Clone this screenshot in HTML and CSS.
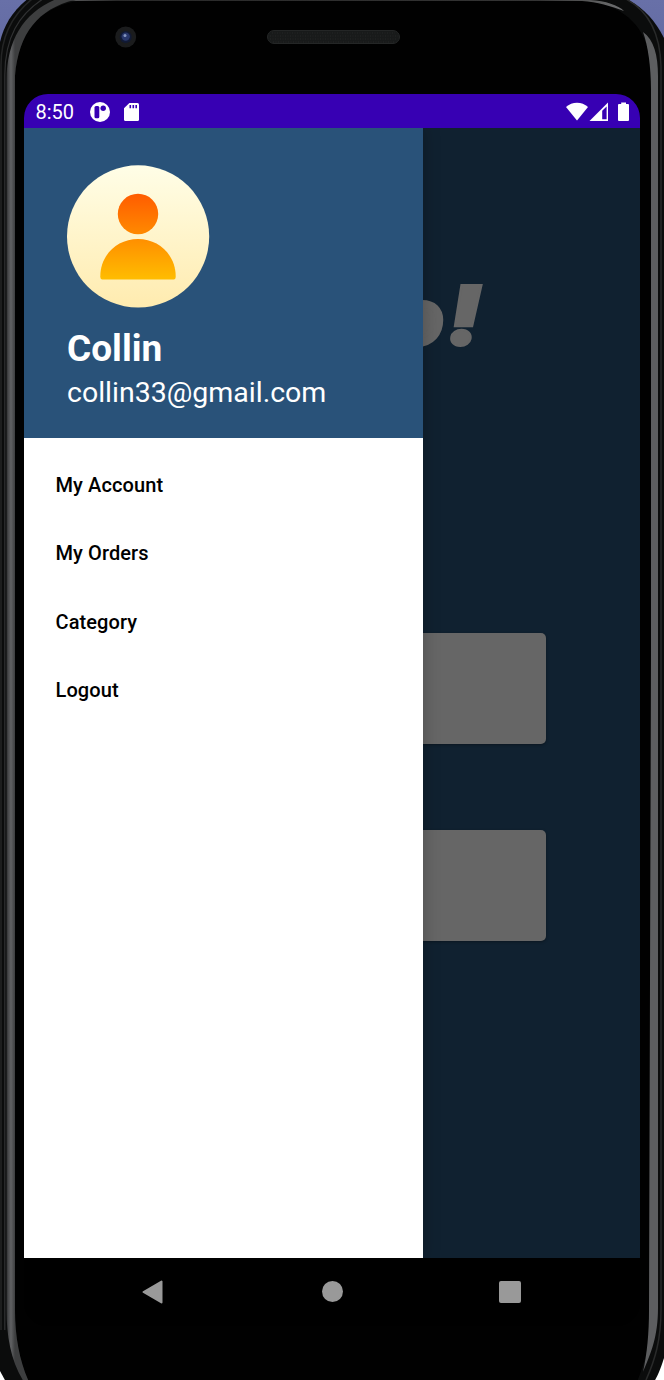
FILE: index.html
```html
<!DOCTYPE html>
<html lang="en">
<head>
<meta charset="utf-8">
<title>Navigation drawer</title>
<link rel="stylesheet" href="styles.css">
</head>
<body>
<div class="phone">
  <svg class="frame" viewBox="0 0 664 1380" aria-hidden="true">
    <defs>
      <linearGradient id="railLeft" gradientUnits="userSpaceOnUse" x1="6" x2="15" y1="0" y2="0">
        <stop offset="0" stop-color="#252627"/><stop offset=".25" stop-color="#48494b"/><stop offset=".55" stop-color="#606163"/><stop offset="1" stop-color="#3d3e3f"/>
      </linearGradient>
      <linearGradient id="backdrop" x1="0" x2="0" y1="0" y2="1">
        <stop offset="0" stop-color="#6870a8"/><stop offset="1" stop-color="#5f679d"/>
      </linearGradient>
      <linearGradient id="topRail" gradientUnits="userSpaceOnUse" x1="60" x2="624" y1="0" y2="0">
        <stop offset="0" stop-color="#626365"/><stop offset=".1" stop-color="#292929"/><stop offset=".85" stop-color="#343434"/><stop offset="1" stop-color="#707172"/>
      </linearGradient>
    </defs>
    <rect width="664" height="100" fill="url(#backdrop)"/>
    <path d="M0 42C4 25 13 10 29 -2H624C642 6 655 20 664 38V1358C661 1368 658 1375 654 1382H6L0 1371Z" fill="#0b0c0c"/>
    <path d="M15 1310V76C19 29 42 5 84 0H582C614 3 640 18 648 50L652 90V1310C651 1340 645 1362 637 1382H29C20 1362 15 1338 15 1310Z" fill="#010101"/>
    <path d="M1 1330V65C1 35 14 12 36 -4" fill="none" stroke="#242525" stroke-width="1.500"/>
    <path d="M4.800 1330V75C5 38 18 14 46 -3" fill="none" stroke="#303132" stroke-width="1.200"/>
    <path d="M6.500 1310V80C7 38 25 11 59 -2H84C42 5 19 29 15 76V1310C15 1338 20 1362 29 1382H24C11 1362 6.500 1336 6.500 1310Z" fill="url(#railLeft)"/>
    <path d="M70 0H590C606 1 618 5 624 11C611 6 597 2 582 1H76Z" fill="url(#topRail)"/>
    <path d="M626 -1C647 10 660 32 661 66V1310C661 1340 655 1360 646 1380" fill="none" stroke="#292a2a" stroke-width="1.500"/>
    <path d="M643 32C654 40 658 55 658 76V1308C658 1337 651 1353 643 1372C647 1354 649 1333 649 1310L651 650V90C651 66 648 46 643 32Z" fill="#5d5e60"/>
    <rect x="267.500" y="30.500" width="132" height="13" rx="6.500" fill="#181a1a" stroke="#242626"/>
    <path d="M272 33H395M270 36H398M270 39H397M273 42H394" stroke="#292b2b" stroke-width=".8" stroke-dasharray="1 1.500"/>
    <circle cx="125.700" cy="37" r="10.500" fill="#1b1c1d"/>
    <circle cx="125.700" cy="37" r="6" fill="#111a34"/>
    <circle cx="125.700" cy="36.600" r="4.200" fill="#28376b"/>
    <circle cx="125" cy="35.500" r="1.500" fill="#8394bf"/>
  </svg>
  <main class="screen">
    <header class="status">
      <span class="time">8:50</span>
      <svg class="badge" viewBox="0 0 20 20"><circle cx="10" cy="10" r="10" fill="#fff"/><rect x="4.500" y="4" width="4.800" height="12.300" rx="1.500" fill="#3700b3"/><circle cx="13.200" cy="6.300" r="2.700" fill="#3700b3"/></svg>
      <svg class="card" viewBox="0 0 15 18"><path d="M5.400 0H13.500Q15 0 15 1.500V16.500Q15 18 13.500 18H1.500Q0 18 0 16.500V5.200Z" fill="#fff"/><path d="M6.300 2V5.200M9.300 2V5.200M12.200 2V5.200" stroke="#3700b3" stroke-width="1.600"/></svg>
      <svg class="signals" viewBox="0 0 65 20"><path d="M0 5C6 -.8 16 -.8 22 5L11 18.500Z" fill="#fff"/><path d="M42 .5V19H23.500Z" fill="#fff"/><path d="M36.200 8.800L40.600 4.500V17.300H36.200Z" fill="#3700b3"/><path d="M55.200 2V.6H60V2H62Q63 2 63 3V18Q63 19 62 19H53Q52 19 52 18V3Q52 2 53 2Z" fill="#fff"/></svg>
    </header>
    <div class="body">
      <aside class="drawer">
        <section class="profile">
          <svg class="avatar" viewBox="0 0 143 143">
            <defs>
              <linearGradient id="disc" x1="0" x2="0" y1="0" y2="1"><stop stop-color="#fffee7"/><stop offset="1" stop-color="#ffebaf"/></linearGradient>
              <linearGradient id="person" gradientUnits="userSpaceOnUse" x1="0" x2="0" y1="28" y2="114"><stop stop-color="#ff5b00"/><stop offset="1" stop-color="#ffbc00"/></linearGradient>
            </defs>
            <circle cx="71.100" cy="71.400" r="71.100" fill="url(#disc)"/>
            <circle cx="71" cy="49" r="20.200" fill="url(#person)"/>
            <path d="M33.300 111.500C33.300 90 50 74 71 74S108.700 90 108.700 111.500Q108.700 114.400 106.700 114.400H35.300Q33.300 114.400 33.300 111.500Z" fill="url(#person)"/>
          </svg>
          <h1 class="name">Collin</h1>
          <p class="email">collin33@gmail.com</p>
        </section>
        <nav class="menu">
          <a class="item">My Account</a>
          <a class="item">My Orders</a>
          <a class="item">Category</a>
          <a class="item">Logout</a>
        </nav>
      </aside>
      <section class="content">
        <div class="title"><span class="letter">o</span><span class="mark">!</span></div>
        <div class="tile"></div>
        <div class="tile"></div>
      </section>
    </div>
    <footer class="navbar">
      <svg class="back" viewBox="0 0 22 24"><path d="M19.500 1.500V22.500L1.500 12Z" fill="#999" stroke="#999" stroke-width="2" stroke-linejoin="round"/></svg>
      <span class="home"></span>
      <span class="recent"></span>
    </footer>
  </main>
</div>
</body>
</html>
```

FILE: styles.css
```css
* { box-sizing: border-box; }
body { margin: 0; background: #fff; font-family: Roboto, "Liberation Sans", sans-serif; overflow: hidden; }
.phone { position: relative; width: 664px; height: 1380px; padding: 94px 24px 54px; }
.frame { position: absolute; inset: 0; width: 664px; height: 1380px; }
.screen { position: relative; height: 1232px; display: flex; flex-direction: column; border-radius: 24px; overflow: hidden; background: #000; }
.status { height: 34px; display: flex; align-items: center; padding: 1px 10px 0 11.500px; background: #3700b3; color: #fff; }
.time { width: 54.500px; font-size: 20px; line-height: 24px; }
.badge { width: 20px; height: 20px; margin-right: 14px; }
.card { width: 15px; height: 18px; }
.signals { width: 65px; height: 20px; margin-left: auto; margin-right: -1px; }
.body { height: 1129.500px; display: flex; overflow: hidden; }
.drawer { width: 399px; flex: none; background: #fff; z-index: 1; box-shadow: 0 0 16px rgba(0,0,0,.25); }
.profile { height: 310.300px; padding: 37px 43px 0; background: #295279; color: #fff; }
.avatar { display: block; width: 143px; height: 143px; }
.name { margin: 20px 0 0; font-size: 37px; line-height: 42px; font-weight: 700; }
.email { margin: 6px 0 0; font-size: 28.500px; line-height: 34px; }
.menu { padding-top: 12.600px; }
.item { display: flex; align-items: center; height: 68.400px; padding-left: 31.500px; font-size: 20px; font-weight: 500; letter-spacing: .1px; color: #000; }
.content { flex: 1; min-width: 0; background: #102130; }
.title { height: 505px; padding-top: 137px; margin-left: -25px; display: flex; font: italic 900 82px/101px Inter, Roboto, sans-serif; color: #666; white-space: nowrap; }
.letter { width: 47.500px; font-size: 69px; line-height: 105px; -webkit-text-stroke: 8px #666; }
.mark { transform: scaleX(1.17); transform-origin: left; -webkit-text-stroke: 2px #666; }
.tile { width: 123px; height: 111px; margin-bottom: 86px; background: #666; border-radius: 0 5px 5px 0; box-shadow: 0 1px 3px rgba(0,0,0,.35); }
.navbar { flex: 1; display: flex; align-items: center; padding-left: 118px; background: #000; }
.back { width: 22px; height: 24px; }
.home { width: 21px; height: 21px; margin-left: 157.500px; border-radius: 50%; background: #999; }
.recent { width: 22px; height: 22px; margin-left: 156.500px; border-radius: 2px; background: #999; }
```
